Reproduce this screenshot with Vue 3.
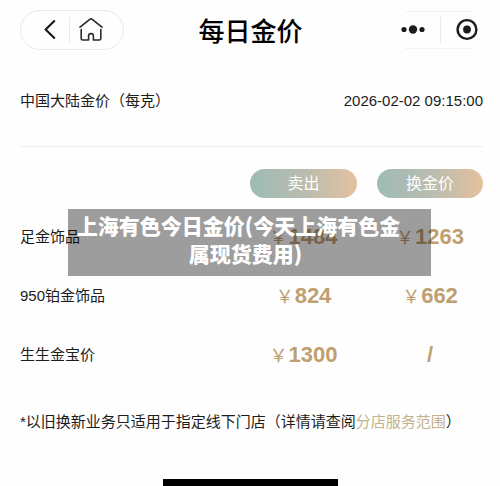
<script setup>
const rows = [
  { name: '足金饰品', sell: '1484', trade: '1263' },
  { name: '950铂金饰品', sell: '824', trade: '662' },
  { name: '生生金宝价', sell: '1300', trade: null },
]
</script>

<template>
  <div class="page">
    <header class="topbar">
      <div class="capsule">
        <button type="button" class="icon-btn" aria-label="返回">
          <svg width="24" height="24" viewBox="0 0 24 24" fill="none" stroke="#111" stroke-width="2">
            <path d="M17.8 2.5 L8.6 11.5 L17.8 20.5" />
          </svg>
        </button>
        <span class="split"></span>
        <button type="button" class="icon-btn" aria-label="首页">
          <svg width="26" height="26" viewBox="0 0 26 26" fill="none" stroke="#2a2a2a" stroke-width="1.6" stroke-linecap="round" stroke-linejoin="round">
            <path d="M2 10.2 L11.8 2.3 Q13 1.3 14.2 2.3 L24 10.2" />
            <path d="M3.2 12.6 V21.4 Q3.2 23 4.8 23 H10.6 V18.8 Q10.6 16.6 13 16.6 Q15.4 16.6 15.4 18.8 V23 H21.2 Q22.8 23 22.8 21.4 V12.6" />
          </svg>
        </button>
      </div>
      <h1 class="title">每日金价</h1>
      <div class="capsule faint">
        <button type="button" class="icon-btn" aria-label="更多">
          <svg width="26" height="24" viewBox="0 0 26 24" fill="#1c1c1c">
            <circle cx="4" cy="11.5" r="2.6" />
            <circle cx="13" cy="11.5" r="4.2" />
            <circle cx="22" cy="11.5" r="2.6" />
          </svg>
        </button>
        <span class="split"></span>
        <button type="button" class="icon-btn" aria-label="关闭">
          <svg width="24" height="24" viewBox="0 0 24 24">
            <circle cx="12" cy="11.5" r="9.4" fill="none" stroke="#1c1c1c" stroke-width="2.4" />
            <circle cx="12" cy="11.5" r="3.9" fill="#1c1c1c" />
          </svg>
        </button>
      </div>
    </header>

    <main class="content">
      <div class="info">
        <span>中国大陆金价（每克）</span>
        <time datetime="2026-02-02T09:15:00">2026-02-02 09:15:00</time>
      </div>

      <table class="prices">
        <colgroup>
          <col />
          <col class="col-sell" />
          <col class="col-trade" />
        </colgroup>
        <thead>
          <tr>
            <td></td>
            <th scope="col"><span class="pill">卖出</span></th>
            <th scope="col" class="trade"><span class="pill">换金价</span></th>
          </tr>
        </thead>
        <tbody>
          <tr v-for="row in rows" :key="row.name">
            <th scope="row">{{ row.name }}</th>
            <td>
              <span class="price"><span class="yen">￥</span>{{ row.sell }}</span>
            </td>
            <td class="trade">
              <span v-if="row.trade" class="price"><span class="yen">￥</span>{{ row.trade }}</span>
              <span v-else class="none">/</span>
            </td>
          </tr>
        </tbody>
      </table>

      <p class="note">*以旧换新业务只适用于指定线下门店（详情请查阅<a href="#stores">分店服务范围</a>）</p>
    </main>

    <div class="home-bar"></div>

    <div class="caption">
      <span class="line first">上海有色今日金价(今天上海有色金</span>
      <span class="line">属现货费用)</span>
    </div>
  </div>
</template>

<style>
body {
  background: #fefefe;
}
</style>

<style scoped>
.page {
  position: relative;
  display: flex;
  flex-direction: column;
  min-height: 100vh;
  color: #1c1c1c;
  font-family: "Liberation Sans", "Noto Sans CJK SC", sans-serif;
  font-size: 15px;
  line-height: 22px;
}

.topbar {
  display: grid;
  grid-template-columns: 104px 1fr 104px;
  align-items: center;
  height: 60px;
  padding: 0 9px 0 20px;
}

.capsule {
  display: flex;
  align-items: center;
  box-sizing: border-box;
  height: 40px;
  padding-left: 16px;
  border: 1px solid #e9e9e9;
  border-radius: 20px;
  gap: 8px;
}

.faint {
  justify-content: center;
  padding-left: 0;
  border-color: transparent;
  background: linear-gradient(#f3f3f3, #f3f3f3) center top / 68px 1px no-repeat,
    linear-gradient(#f3f3f3, #f3f3f3) center bottom / 68px 1px no-repeat;
  gap: 14px;
}

.icon-btn {
  display: flex;
  padding: 0;
  border: 0;
  background: none;
  cursor: pointer;
}

.split {
  width: 1px;
  height: 26px;
  background: #e9e9e9;
}

.title {
  margin: 0;
  padding-right: 10px;
  color: #000;
  font-size: 26px;
  font-weight: 500;
  line-height: 34px;
  text-align: center;
  font-family: "Noto Sans CJK SC", sans-serif;
}

.content {
  flex: 1;
  padding: 0 17px 0 20px;
}

.info {
  display: flex;
  justify-content: space-between;
  padding: 30px 0 34px;
  border-bottom: 1px solid #efefef;
}

.prices {
  width: 100%;
  table-layout: fixed;
  border-collapse: collapse;
}

.col-sell {
  width: 107px;
}

.col-trade {
  width: 126px;
}

.prices th,
.prices td {
  padding: 0;
  font-weight: 400;
  text-align: center;
}

.prices thead th {
  padding: 22px 0 9px;
}

.prices tbody tr {
  height: 59px;
}

.prices tbody th {
  text-align: left;
}

.prices .trade {
  padding-left: 20px;
}

.pill {
  display: block;
  border-radius: 15px;
  background: linear-gradient(90deg, #9dbbb7, #b9bcb0 50%, #e3c19f);
  color: #fff;
  font-size: 16px;
  line-height: 29px;
}

.price,
.none {
  color: #bf9f70;
  font-size: 22px;
  font-weight: 700;
  line-height: 28px;
  white-space: nowrap;
}

.yen {
  margin-right: 1px;
  font-family: "Noto Sans CJK SC", sans-serif;
  font-size: 18px;
  font-weight: 400;
}

.note {
  margin: 0;
  padding: 27px 0;
  white-space: nowrap;
}

.note a {
  color: #c3b28c;
  text-decoration: none;
}

.home-bar {
  width: 35%;
  height: 7px;
  margin: 0 auto;
  background: #000;
}

.caption {
  position: absolute;
  top: 209px;
  left: 68px;
  right: 69px;
  box-sizing: border-box;
  padding: 2px 8px 9px 0;
  background: rgba(0, 0, 0, 0.38);
  color: #fff;
  font-size: 21px;
  font-weight: 900;
  line-height: 28px;
  text-align: center;
  font-family: "Noto Sans CJK SC", sans-serif;
}

.line {
  display: block;
}

.first {
  padding-right: 14px;
}
</style>
